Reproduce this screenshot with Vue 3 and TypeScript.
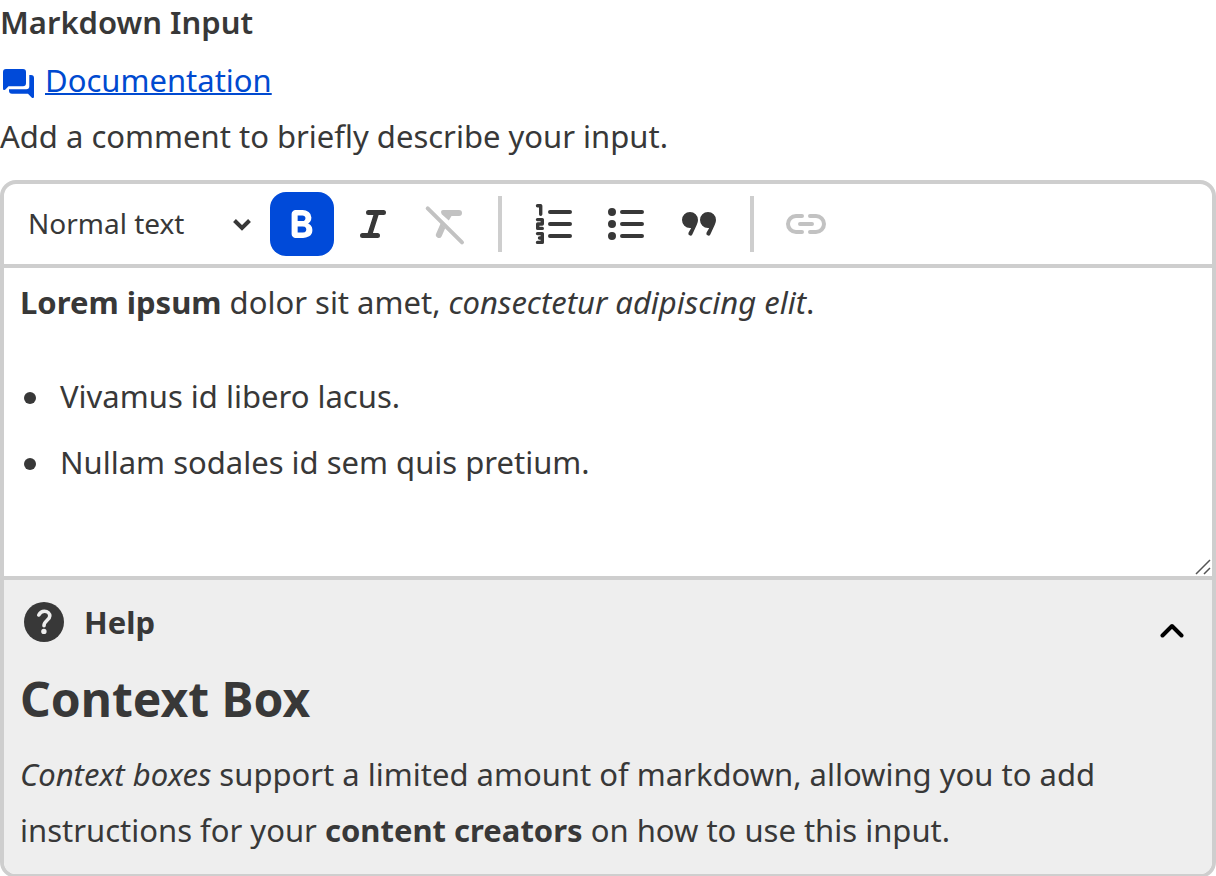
<script setup lang="ts">
import { ref } from 'vue'

type Mark = 'bold' | 'italic'

const blockType = ref('Normal text')
const blockTypes: string[] = ['Normal text', 'Heading 1', 'Heading 2', 'Heading 3']
const active = ref<Mark | null>('bold')
const helpOpen = ref(true)

function toggle(mark: Mark): void {
  active.value = active.value === mark ? null : mark
}
</script>

<template>
  <main class="field">
    <h2 id="field-label" class="label">Markdown Input</h2>
    <div class="docs">
      <svg class="docs-icon" viewBox="0 -4 36 36" aria-hidden="true">
        <path d="M6 3H23a3 3 0 0 1 3 3V17.3a3 3 0 0 1-3 3H8.500L5.400 23.400Q3 25 3 22.500V6a3 3 0 0 1 3-3Z" />
        <path d="M29.300 9H31a3 3 0 0 1 3 3V30.500Q34 33 31.600 31.400L28 27.700H12a3 3 0 0 1-3-3V23.300H26.300a3 3 0 0 0 3-3Z" />
      </svg>
      <a href="#documentation">Documentation</a>
    </div>
    <p id="field-hint" class="hint">Add a comment to briefly describe your input.</p>

    <div class="editor">
      <div class="toolbar" role="toolbar" aria-label="Formatting">
        <div class="block-type">
          <select v-model="blockType" aria-label="Text style">
            <option v-for="type in blockTypes" :key="type">{{ type }}</option>
          </select>
          <svg class="caret" viewBox="0 0 24 24" aria-hidden="true">
            <path d="M4.500 8.500L12 16L19.500 8.500" fill="none" stroke="currentColor" stroke-width="4" />
          </svg>
        </div>
        <button type="button" class="tool" :class="{ on: active === 'bold' }" aria-label="Bold" @click="toggle('bold')">
          <svg viewBox="0 0 24 24" fill="currentColor">
            <path d="M8.8 19q-.825 0-1.412-.587T6.8 17V7q0-.825.587-1.412T8.8 5h3.525q1.625 0 3 1T16.7 8.775q0 1.275-.575 1.963t-1.075.987q.625.275 1.388 1.025T17.2 15q0 2.225-1.625 3.113t-3.05.887H8.8Zm1.025-2.8h2.6q1.2 0 1.463-.612t.262-.888q0-.275-.262-.887T12.35 13.2H9.825v3Zm0-5.7h2.325q.825 0 1.2-.425t.375-.95q0-.6-.425-.975t-1.1-.375H9.825V10.5Z" />
          </svg>
        </button>
        <button type="button" class="tool" :class="{ on: active === 'italic' }" aria-label="Italic" @click="toggle('italic')">
          <svg viewBox="0 0 48 48" class="stroked" stroke-width="5">
            <path d="M18.500 12.500H33.500M12.500 35.500H27.500M26.800 12.500L19.500 35.500" />
          </svg>
        </button>
        <button type="button" class="tool" disabled aria-label="Clear formatting">
          <svg viewBox="0 0 48 48" fill="currentColor">
            <path d="M21.500 10H37a3 3 0 0 1 0 6H29.500L26.800 20.500L19.700 14.300Q17.800 10 21.500 10Z" />
            <path d="M18.700 23.300L14.200 33.600a3 3 0 0 0 5.500 2.600L23.300 27.900Z" />
            <path d="M5.700 8.300L40 42.300" stroke="currentColor" stroke-width="4" stroke-linecap="round" />
          </svg>
        </button>
        <span class="divider" />
        <button type="button" class="tool" aria-label="Numbered list">
          <svg viewBox="0 0 48 48" class="stroked" stroke-width="4">
            <path d="M20 12H40M20 24H40M20 36H40" />
            <path d="M7.500 5.700H10.700V14.300M7.500 19.600H12.300V24H7.700V28.400H12.300M7.500 33.600H12.300V42.400H7.500M9.500 38H12.300" stroke-width="3.400" />
          </svg>
        </button>
        <button type="button" class="tool" aria-label="Bulleted list">
          <svg viewBox="0 0 48 48" class="stroked" stroke-width="4">
            <path d="M20 12H40M20 24H40M20 36H40" />
            <path d="M10 12h0M10 24h0M10 36h0" stroke-width="8" />
          </svg>
        </button>
        <button type="button" class="tool" aria-label="Quote">
          <svg viewBox="0 0 48 48" fill="currentColor">
            <path d="M16 12a8 8 0 0 1 8 8q0 2.500-1.200 4.800L18.300 34.500a2.100 2.100 0 0 1-3.700-2L17.200 28H16a8 8 0 0 1 0-16Z" />
            <path d="M34 12a8 8 0 0 1 8 8q0 2.500-1.200 4.800L36.300 34.500a2.100 2.100 0 0 1-3.700-2L35.200 28H34a8 8 0 0 1 0-16Z" />
          </svg>
        </button>
        <span class="divider" />
        <button type="button" class="tool" disabled aria-label="Link">
          <svg viewBox="0 0 48 48" class="stroked" stroke-width="4">
            <path d="M20 16H14a8 8 0 0 0 0 16H20M28 16H34a8 8 0 0 1 0 16H28M18 24H30" />
          </svg>
        </button>
      </div>

      <div class="content-wrap">
        <div class="content" contenteditable="true" spellcheck="false" role="textbox" aria-multiline="true" aria-labelledby="field-label" aria-describedby="field-hint">
          <p><strong>Lorem ipsum</strong> dolor sit amet, <em>consectetur adipiscing elit</em>.</p>
          <ul>
            <li>Vivamus id libero lacus.</li>
            <li>Nullam sodales id sem quis pretium.</li>
          </ul>
        </div>
        <svg class="grip" viewBox="0 0 16 16" aria-hidden="true">
          <path d="M1 15L15 1M9 15L15 9" fill="none" stroke="#555" stroke-width="1.500" />
        </svg>
      </div>

      <section class="help">
        <header class="help-head">
          <svg class="help-icon" viewBox="4 4 40 40" aria-hidden="true">
            <circle cx="24" cy="24" r="20" fill="#383838" />
            <path d="M18.800 17Q20.500 13.300 24.400 13.300C27.800 13.300 29.800 15.500 29.800 18C29.800 22 24 22.700 24 27.700" fill="none" stroke="#eee" stroke-width="3.600" stroke-linecap="round" />
            <circle cx="23.900" cy="33.400" r="2.700" fill="#eee" />
          </svg>
          <h3>Help</h3>
          <button type="button" class="collapse" :aria-expanded="helpOpen" aria-label="Toggle help" @click="helpOpen = !helpOpen">
            <svg viewBox="0 0 24 24" class="stroked" stroke-width="4">
              <path d="M2.500 16.500L12 7L21.500 16.500" />
            </svg>
          </button>
        </header>
        <div v-if="helpOpen" class="help-body">
          <h1>Context Box</h1>
          <p><em>Context boxes</em> support a limited amount of markdown, allowing you to add instructions for your <strong>content creators</strong> on how to use this input.</p>
        </div>
      </section>
    </div>
  </main>
</template>

<style>
body {
  background: #fff;
}
</style>

<style scoped>
.field {
  font: 400 31px/56px "Noto Sans", sans-serif;
  color: #383838;
}

h1,
h2,
h3,
p,
ul {
  margin: 0;
}

svg {
  display: block;
  flex: none;
}

.stroked {
  fill: none;
  stroke: currentColor;
  stroke-linecap: round;
  stroke-linejoin: round;
}

.label {
  font-size: 31px;
  line-height: 44px;
  font-weight: 600;
  margin-bottom: 8px;
}

.docs {
  display: flex;
  align-items: center;
  gap: 9px;
}

.docs-icon {
  width: 36px;
  height: 36px;
  fill: #004ad9;
}

.docs a {
  color: #004ad0;
  text-decoration-thickness: 2px;
}

.editor {
  margin-top: 16px;
  border: 4px solid #cecece;
  border-radius: 16px;
  overflow: hidden;
}

.toolbar {
  display: flex;
  align-items: center;
  gap: 8px;
  padding: 8px;
  border-bottom: 4px solid #cecece;
}

.block-type {
  display: grid;
  align-items: center;
  width: 250px;
}

.block-type > * {
  grid-area: 1 / 1;
}

.block-type select {
  appearance: none;
  width: 100%;
  height: 64px;
  padding: 0 40px 2px 16px;
  border: 0;
  border-radius: 12px;
  background: transparent;
  color: inherit;
  font: 400 28px/40px "Noto Sans", sans-serif;
}

.caret {
  width: 24px;
  height: 24px;
  margin-right: 8px;
  justify-self: end;
  pointer-events: none;
}

.tool {
  display: grid;
  place-items: center;
  width: 64px;
  height: 64px;
  padding: 0;
  border: 0;
  border-radius: 16px;
  background: none;
  color: #383838;
}

.tool svg {
  width: 48px;
  height: 48px;
}

.tool.on {
  background: #004ad9;
  color: #fff;
}

.tool:disabled {
  color: #c2c2c2;
}

.divider {
  width: 4px;
  height: 56px;
  margin: 0 12px;
  background: #cecece;
}

.content-wrap {
  position: relative;
}

.content {
  box-sizing: border-box;
  min-height: 308px;
  padding: 10px 16px;
  line-height: 48px;
  outline: 0;
}

.content ul {
  display: grid;
  gap: 18px;
  margin-top: 46px;
  padding: 0;
  list-style: none;
}

.content li {
  display: flex;
  align-items: center;
  gap: 24px;
  padding-left: 4px;
}

.content li::before {
  content: "";
  width: 12px;
  height: 12px;
  margin-top: 4px;
  border-radius: 50%;
  background: #383838;
}

.grip {
  position: absolute;
  right: 1px;
  bottom: 1px;
  width: 16px;
  height: 16px;
}

.help {
  padding: 20px 16px 16px;
  border-top: 4px solid #cecece;
  background: #eee;
}

.help-head {
  display: flex;
  align-items: flex-start;
  gap: 20px;
  padding: 0 4px;
}

.help-icon {
  width: 40px;
  height: 44px;
}

.help-head h3 {
  flex: 1;
  font-size: 31px;
  line-height: 44px;
  font-weight: 700;
}

.collapse {
  display: grid;
  place-items: center;
  width: 40px;
  height: 62px;
  padding: 0;
  border: 0;
  background: none;
  color: #000;
}

.collapse svg {
  width: 24px;
  height: 24px;
}

.help-body h1 {
  margin: 4px 0 14px;
  font-size: 48px;
  line-height: 66px;
  font-weight: 700;
}
</style>
